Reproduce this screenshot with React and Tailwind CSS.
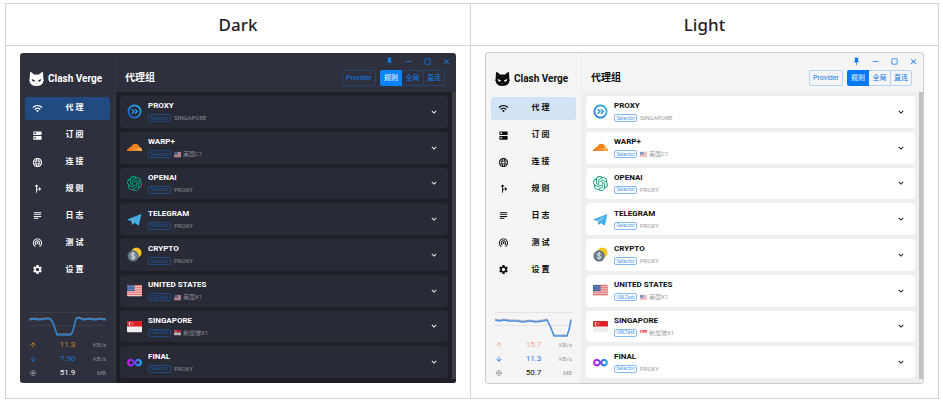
import React from 'react';
import clsx from 'clsx';
import {
    MdArrowDownward,
    MdArrowUpward,
    MdClose,
    MdCropSquare,
    MdDns,
    MdForkRight,
    MdHorizontalRule,
    MdKeyboardArrowDown,
    MdLanguage,
    MdMemory,
    MdPushPin,
    MdSettings,
    MdSubject,
    MdWifi,
    MdWifiTethering,
} from 'react-icons/md';
import { SiOpenai } from 'react-icons/si';

const navItems = [
    { label: '代 理', icon: MdWifi, active: true },
    { label: '订 阅', icon: MdDns },
    { label: '连 接', icon: MdLanguage },
    { label: '规 则', icon: MdForkRight },
    { label: '日 志', icon: MdSubject },
    { label: '测 试', icon: MdWifiTethering },
    { label: '设 置', icon: MdSettings },
];

const groups = [
    { name: 'PROXY', type: 'Selector', now: 'SINGAPORE', icon: ProxyIcon },
    { name: 'WARP+', type: 'Selector', now: '美国C1', flag: UsFlag, icon: CloudIcon },
    { name: 'OPENAI', type: 'Selector', now: 'PROXY', icon: OpenAiIcon },
    { name: 'TELEGRAM', type: 'Selector', now: 'PROXY', icon: TelegramIcon },
    { name: 'CRYPTO', type: 'Selector', now: 'PROXY', icon: CryptoIcon },
    { name: 'UNITED STATES', type: 'URLTest', now: '美国X1', flag: UsFlag, icon: UsFlag },
    { name: 'SINGAPORE', type: 'URLTest', now: '新加坡X1', flag: SgFlag, icon: SgFlag },
    { name: 'FINAL', type: 'Selector', now: 'PROXY', icon: InfinityIcon },
];

const dark = {
    window: 'min-h-[330px] bg-[#2e303d] text-white',
    divider: 'border-[#343643]',
    active: 'bg-[#204a80]',
    accent: 'text-[#0f7ce8]',
    outline: 'border-[#24446e]',
    selected: 'bg-[#0a84ff] text-white',
    list: 'bg-[#1e1f27]',
    card: 'bg-[#282a36]',
    chip: 'border-[#1f4a80] text-[#1c5596]',
    muted: 'text-[#8b8c94]',
    scroll: 'bg-[#3d3d44]',
    up: 'text-[#c98a2c]',
    down: 'text-[#1d72d0]',
    upLine: '#8d8578',
    downLine: '#2a7fd0',
    grid: '#3a3c48',
    line: 'M0 8 L5 7 L10 8 L16 7 L21 7 L24 11 L28 23 L42 23 L44 19 L47 7 L50 6 L55 8 L60 7 L66 8 L71 7 L77 8',
    stats: ['11.3', '7.90', '51.9'],
};

const light = {
    window: 'min-h-[332px] border border-[#cbccd0] bg-[#f5f5f5] text-[#0d0d0d]',
    divider: 'border-[#ededed]',
    active: 'bg-[#d3e3f6]',
    accent: 'text-[#1279ea]',
    outline: 'border-[#b5d3f3]',
    selected: 'bg-[#007aff] text-white',
    list: 'bg-[#efefef]',
    card: 'bg-white',
    chip: 'border-[#86bbf7] text-[#4d9bf5]',
    muted: 'text-[#9b9b9b]',
    scroll: 'bg-[#c1c1c1]',
    up: 'text-[#f3a88c]',
    down: 'text-[#2a72e5]',
    upLine: '#b3aab0',
    downLine: '#4a90e2',
    grid: '#e4e4e4',
    line: 'M0 8 L4 9 L9 8 L15 9 L22 9 L28 10 L34 9 L41 10 L48 9 L52 8 L55 14 L59 24 L72 24 L74 18 L76 8',
    stats: ['15.7', '11.3', '50.7'],
};

function CatLogo({ className, eyes }) {
    return (
        <svg viewBox="0 0 30 28" className={className} aria-hidden="true">
            <path
                fill="currentColor"
                d="M2 1.2C2.4 0 3.5-.1 4.6.6L11 5.6c2.6-.6 5.4-.6 8 0L25.4.6c1.1-.7 2.2-.6 2.6.6l.7 12.3c.3 1.6 1 3 1.2 4.2-1 .1-1.6.5-2.2 1.3.6.6.7 1.1.6 1.8-2.200 4.600-7.300 7.200-13.300 7.200S3.900 25.400 1.700 20.800c-.1-.7 0-1.200.6-1.800-.6-.8-1.200-1.200-2.200-1.300.2-1.200.9-2.600 1.200-4.200z"
            />
            <path fill={eyes} d="M5.500 14.200l6.200 2.500c.3 1.900-1 3-2.700 2.700-2-.3-3.400-2.600-3.500-5.200zM24.500 14.200l-6.200 2.500c-.3 1.900 1 3 2.700 2.700 2-.3 3.400-2.600 3.500-5.200zM13.600 22h2.800L15 23.700z" />
        </svg>
    );
}

function ProxyIcon({ className }) {
    return (
        <svg viewBox="0 0 32 32" className={className} aria-hidden="true">
            <defs>
                <linearGradient id="proxyRing" x1="1" y1="0" x2="0" y2="1">
                    <stop offset="0" stopColor="#22b8f0" />
                    <stop offset="1" stopColor="#1a62d8" />
                </linearGradient>
            </defs>
            <circle cx="16" cy="16" r="13" fill="none" stroke="url(#proxyRing)" strokeWidth="3.500" />
            <path d="M10 11l5 5-5 5M17 11l5 5-5 5" fill="none" stroke="#2196e8" strokeWidth="3" />
        </svg>
    );
}

function CloudIcon({ className }) {
    return (
        <svg viewBox="0 0 32 32" className={className} aria-hidden="true">
            <path fill="#f6821f" d="M0 23.500c-.3-3 1.700-5.200 4.500-5.400-.2-2.500 2-3.900 4-2.800C10.500 10.500 14 8 18 8c4.400 0 7.600 3 8.500 7l-3 8.500z" />
            <path fill="#fbad41" d="M23 23.500c.8-2.500.6-4-1.500-4.800l5.600-3.500c3 .4 5.400 3.600 4.900 8.300z" />
            <path fill="none" stroke="#fff" strokeOpacity=".6" strokeWidth="1" d="M10 19.500h12l4.500-4" />
        </svg>
    );
}

function OpenAiIcon({ className }) {
    return <SiOpenai className={clsx(className, 'text-[#10a37f]')} />;
}

function TelegramIcon({ className }) {
    return (
        <svg viewBox="0 0 32 32" className={className} aria-hidden="true">
            <path fill="#41aee8" d="M30.500 4L1.500 15.500c-.9.4-.8 1.200.1 1.500l7.200 2.300L25 9 13 21l10.600 7.300c1 .6 2 .2 2.200-1z" />
            <path fill="#7cc4ea" d="M8.800 19.300L25 9 13.500 20.500 12 27.500z" />
            <path fill="#3a8fc4" d="M12 27.500l1-6.500 4 2.700z" />
        </svg>
    );
}

function CryptoIcon({ className }) {
    return (
        <svg viewBox="0 0 32 32" className={className} aria-hidden="true">
            <circle cx="20" cy="12" r="11" fill="#f3c623" />
            <circle cx="13" cy="19" r="12" fill="#5c6c78" />
            <circle cx="13" cy="19" r="9.500" fill="#728390" />
            <path
                d="M17 15.500c-.6-1.600-2-2.200-4-2.200-2.200 0-3.800.9-3.800 2.700 0 4 7.800 1.800 7.800 5.800 0 1.900-1.600 2.900-4 2.900s-4-.9-4.300-2.700M13 11v16"
                fill="none"
                stroke="#e3edf0"
                strokeWidth="2"
            />
        </svg>
    );
}

function InfinityIcon({ className }) {
    return (
        <svg viewBox="0 0 32 32" className={className} aria-hidden="true">
            <defs>
                <linearGradient id="infinityStroke">
                    <stop offset="0" stopColor="#c81ef0" />
                    <stop offset=".5" stopColor="#6a3df0" />
                    <stop offset="1" stopColor="#10b4f0" />
                </linearGradient>
            </defs>
            <path
                d="M13 19.500c-1.400 2-2.800 3-5 3A6.300 6.300 0 0 1 8 10c7 0 9 12.500 16 12.500A6.300 6.300 0 0 0 24 10c-2.200 0-3.600 1-5 3"
                fill="none"
                stroke="url(#infinityStroke)"
                strokeWidth="4.500"
                strokeLinecap="round"
            />
        </svg>
    );
}

function UsFlag({ className }) {
    return (
        <svg viewBox="0 0 32 32" className={className} aria-hidden="true">
            <rect y="4" width="32" height="24" rx="2" fill="#f3efef" />
            <path stroke="#dd4a4a" strokeWidth="2" d="M1 5h30M0 9h32M0 13h32M0 17h32M0 21h32M0 25h32" />
            <path fill="#3d5f9e" d="M2 4h14v13H0V6z" />
            <path stroke="#cbd6ea" strokeWidth="1.500" strokeDasharray="1.500 2.500" d="M2 7.500h13M4 10.500h11M2 13.500h13" />
        </svg>
    );
}

function SgFlag({ className }) {
    return (
        <svg viewBox="0 0 32 32" className={className} aria-hidden="true">
            <rect y="4" width="32" height="24" rx="2" fill="#eeeeee" />
            <path fill="#e01f26" d="M2 4h28l2 2v10H0V6z" />
            <circle cx="7.500" cy="10" r="4" fill="#fff" />
            <circle cx="9.200" cy="10" r="3.600" fill="#e01f26" />
            <path stroke="#fff" strokeWidth="1.500" strokeDasharray="1.500 1.500" d="M9.500 9h5M10.500 12h3" />
        </svg>
    );
}

function Traffic({ theme }) {
    const rows = [
        { label: '上传', icon: MdArrowUpward, unit: 'KB/s', color: theme.up },
        { label: '下载', icon: MdArrowDownward, unit: 'KB/s', color: theme.down },
        { label: '内存', icon: MdMemory, unit: 'MB', color: '' },
    ];

    return (
        <div className="mt-auto px-[9px] pb-[3px]">
            <svg viewBox="0 0 77 26" className="block h-[26px] w-full" preserveAspectRatio="none" aria-hidden="true">
                <path d="M0 .5h77M0 13.500h77" stroke={theme.grid} strokeWidth="1" />
                <path d={theme.line} transform="translate(0 -1)" fill="none" stroke={theme.upLine} strokeWidth="1" />
                <path d={theme.line} fill="none" stroke={theme.downLine} strokeWidth="1.500" strokeLinejoin="round" />
            </svg>
            {rows.map((row, idx) => {
                const Icon = row.icon;
                return (
                    <div key={row.label} className={clsx('flex h-[14px] items-center', row.color)}>
                        <Icon title={row.label} className={clsx('size-2 shrink-0', !row.color && theme.muted)} />
                        <span className="flex-1 pl-3 text-center text-[8px]">{theme.stats[idx]}</span>
                        <span className={clsx('w-5 text-right text-[6px]', theme.muted)}>{row.unit}</span>
                    </div>
                );
            })}
        </div>
    );
}

function Sidebar({ theme }) {
    return (
        <aside className={clsx('flex w-24 shrink-0 flex-col border-r', theme.divider)}>
            <div className="flex h-11 items-center gap-1 pt-2 pl-[9px]">
                <CatLogo className="w-[15px] shrink-0" eyes={theme === dark ? '#2e303d' : '#f5f5f5'} />
                <span className="text-[10px] font-bold whitespace-nowrap">Clash Verge</span>
            </div>
            <nav className="grid min-h-46 grid-rows-7 gap-1 px-[5px]">
                {navItems.map((item) => {
                    const Icon = item.icon;
                    return (
                        <a
                            key={item.label}
                            href="#"
                            className={clsx('flex items-center rounded-[3px] pl-[7px]', item.active && theme.active)}
                        >
                            <Icon className="size-[11px] shrink-0" />
                            <span className="flex-1 pr-3 pl-2 text-center text-[8px] font-bold">{item.label}</span>
                        </a>
                    );
                })}
            </nav>
            <Traffic theme={theme} />
        </aside>
    );
}

function Toolbar({ theme }) {
    const controls = [
        { label: 'Pin', icon: MdPushPin },
        { label: 'Minimize', icon: MdHorizontalRule },
        { label: 'Maximize', icon: MdCropSquare },
        { label: 'Close', icon: MdClose },
    ];

    return (
        <header className="pb-[5px]">
            <div className={clsx('flex h-4 items-center justify-end gap-[10px] pr-[5px]', theme.accent)}>
                {controls.map(({ label, icon: Icon }) => (
                    <button key={label} type="button" aria-label={label}>
                        <Icon className="size-[9px]" />
                    </button>
                ))}
            </div>
            <div className="flex h-[18px] items-center pr-[11px] pl-[9px]">
                <h2 className="flex-1 text-[10px] font-bold">代理组</h2>
                <div className={clsx('flex h-4 text-[7px]', theme.accent)}>
                    <button type="button" className={clsx('mr-1 w-[34px] rounded-[2px] border', theme.outline)}>
                        Provider
                    </button>
                    <button type="button" className={clsx('w-[22px] rounded-l-[2px]', theme.selected)}>
                        规则
                    </button>
                    <button type="button" className={clsx('w-[21px] border-y', theme.outline)}>
                        全局
                    </button>
                    <button type="button" className={clsx('w-[22px] rounded-r-[2px] border', theme.outline)}>
                        直连
                    </button>
                </div>
            </div>
        </header>
    );
}

function GroupCard({ group, theme }) {
    const Icon = group.icon;
    const Flag = group.flag;

    return (
        <li className={clsx('flex flex-1 items-center rounded-[4px] pr-[9px] pl-[7px]', theme.card)}>
            <Icon className="size-[15px] shrink-0" />
            <div className="flex-1 pt-px pl-[6px]">
                <h3 className="text-[8px] leading-[12px] font-bold">{group.name}</h3>
                <div className="flex h-[12px] items-center gap-[3px] text-[6px]">
                    <span className={clsx('flex h-2 w-[23px] items-center justify-center rounded-[2px] border text-[5px]', theme.chip)}>
                        {group.type}
                    </span>
                    <span className={clsx('flex items-center gap-[2px]', theme.muted)}>
                        {Flag && <Flag className="size-[7px] opacity-70" />}
                        {group.now}
                    </span>
                </div>
            </div>
            <button type="button" aria-label={`Expand ${group.name}`}>
                <MdKeyboardArrowDown className="size-[10px]" />
            </button>
        </li>
    );
}

function AppWindow({ theme }) {
    return (
        <div
            className={clsx(
                "flex overflow-hidden rounded-[3px] font-[Roboto,'Noto_Sans_CJK_SC',sans-serif] leading-none",
                theme.window
            )}
        >
            <Sidebar theme={theme} />
            <main className="flex min-w-0 flex-1 flex-col">
                <Toolbar theme={theme} />
                <div className={clsx('flex flex-1 gap-1 pl-1', theme.list)}>
                    <ul className="flex flex-1 flex-col gap-1 pt-1 pb-[5px]">
                        {groups.map((group) => (
                            <GroupCard key={group.name} group={group} theme={theme} />
                        ))}
                    </ul>
                    <div className={clsx('mb-1 w-1', theme.scroll)} />
                </div>
            </main>
        </div>
    );
}

export default function App() {
    return (
        <div className="bg-white pt-[3px] pr-1 pl-[5px] font-['Noto_Sans',sans-serif] text-[#1f2328]">
            <table className="w-full table-fixed border-collapse">
                <colgroup>
                    <col className="w-[465px]" />
                    <col />
                </colgroup>
                <thead>
                    <tr className="h-[42px]">
                        <th className="border border-[#d1d5db] p-0 text-[17px] font-medium">Dark</th>
                        <th className="border border-[#d1d5db] p-0 text-[17px] font-medium">Light</th>
                    </tr>
                </thead>
                <tbody>
                    <tr>
                        <td className="border border-[#d1d5db] px-[14px] pt-[6px] pb-[14px] align-middle">
                            <AppWindow theme={dark} />
                        </td>
                        <td className="border border-[#d1d5db] px-[14px] pt-[6px] pb-[14px] align-middle">
                            <AppWindow theme={light} />
                        </td>
                    </tr>
                </tbody>
            </table>
        </div>
    );
}
